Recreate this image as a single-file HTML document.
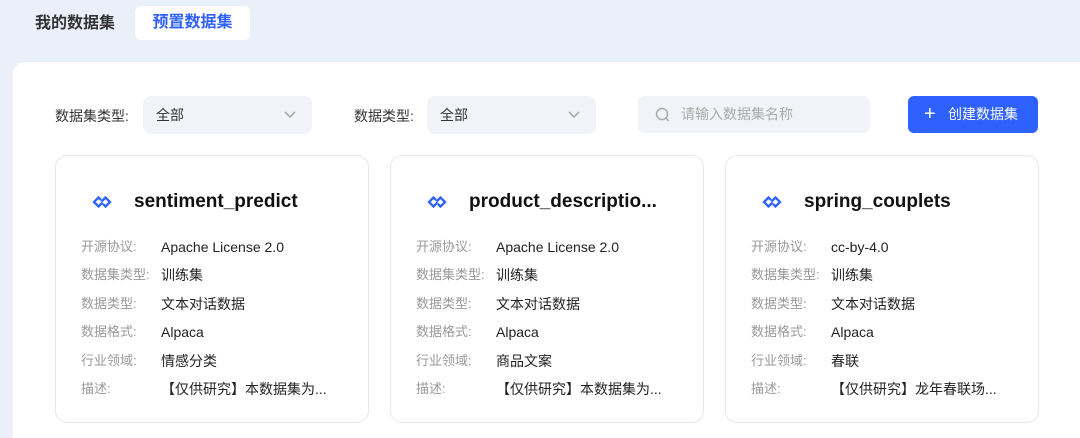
<!DOCTYPE html>
<html><head><meta charset="utf-8"><style>
*{margin:0;padding:0;box-sizing:border-box}
html{width:1080px;height:438px;overflow:hidden;background:#ebeffa}
body{width:1080px;height:438px;overflow:hidden;background:#ebeffa;font-family:"Liberation Sans","Noto Sans CJK SC",sans-serif;position:relative}
.tab1{position:absolute;left:35px;top:14px;font-size:16px;font-weight:bold;color:#333;line-height:20px}
.tab2{position:absolute;left:135px;top:6px;width:115px;height:34px;background:#fff;border-radius:6px;font-size:16px;font-weight:bold;color:#2f61ff;line-height:34px;text-align:center}
.panel{position:absolute;left:13px;top:62px;width:1067px;height:376px;background:#fff;border-radius:12px 0 0 0}
.lbl{position:absolute;top:106px;font-size:14px;color:#333;line-height:20px}
.sel{position:absolute;top:96px;height:38px;background:#f2f3f8;border-radius:8px;font-size:14px;color:#333;line-height:38px;padding-left:13px}
.sel svg{position:absolute;right:16px;top:15px}
.search{position:absolute;left:638px;top:96px;width:232px;height:37px;background:#f2f3f8;border-radius:6px;font-size:14px;color:#aaa;line-height:37px;padding-left:43px}
.search svg{position:absolute;left:17px;top:11px}
.btn{position:absolute;left:908px;top:96px;width:130px;height:37px;background:#2f61ff;border-radius:6px;color:#fff;font-size:14px;line-height:37px;padding-left:40px}
.btn span{position:absolute;left:16px;top:0;font-size:20px}
.card{position:absolute;top:155px;width:314px;height:268px;border:1px solid #e6e8f2;border-radius:12px;background:#fff}
.card .ic{position:absolute;left:36px;top:39px}
.card .t{position:absolute;left:78px;top:34px;font-size:19px;font-weight:bold;color:#111;line-height:24px;white-space:nowrap}
.row{position:absolute;left:25px;font-size:13px;color:#999;line-height:18px;white-space:nowrap}
.row b{position:absolute;left:80px;font-weight:normal;font-size:14px;color:#222}
</style></head><body>
<div class="tab1">我的数据集</div>
<div class="tab2">预置数据集</div>
<div class="panel"></div>
<div class="lbl" style="left:55px">数据集类型:</div>
<div class="sel" style="left:143px;width:169px">全部<svg width="12" height="8"><path d="M1 1l5 5 5-5" stroke="#999" fill="none" stroke-width="1.3"/></svg></div>
<div class="lbl" style="left:354px">数据类型:</div>
<div class="sel" style="left:427px;width:169px">全部<svg width="12" height="8"><path d="M1 1l5 5 5-5" stroke="#999" fill="none" stroke-width="1.3"/></svg></div>
<div class="search"><svg width="16" height="16"><circle cx="7" cy="7" r="5.5" stroke="#aaa" stroke-width="1.5" fill="none"/><path d="M11 11l2.5 3" stroke="#aaa" stroke-width="1.5"/></svg>请输入数据集名称</div>
<div class="btn"><span>+</span>创建数据集</div>

<div class="card" style="left:55px">
<svg class="ic" width="20" height="14" viewBox="0 0 20 14"><path d="M9 5L6.5 2.5 2 7l4.5 4.5 4-4M11 9l2.5 2.5L18 7l-4.5-4.5-4 4" stroke="#2f61ff" stroke-width="2.3" fill="none"/></svg>
<div class="t">sentiment_predict</div>
<div class="row" style="top:82px">开源协议:<b>Apache License 2.0</b></div>
<div class="row" style="top:110px">数据集类型:<b>训练集</b></div>
<div class="row" style="top:139px">数据类型:<b>文本对话数据</b></div>
<div class="row" style="top:167px">数据格式:<b>Alpaca</b></div>
<div class="row" style="top:196px">行业领域:<b>情感分类</b></div>
<div class="row" style="top:224px">描述:<b>【仅供研究】本数据集为...</b></div>
</div>
<div class="card" style="left:390px">
<svg class="ic" width="20" height="14" viewBox="0 0 20 14"><path d="M9 5L6.5 2.5 2 7l4.5 4.5 4-4M11 9l2.5 2.5L18 7l-4.5-4.5-4 4" stroke="#2f61ff" stroke-width="2.3" fill="none"/></svg>
<div class="t">product_descriptio...</div>
<div class="row" style="top:82px">开源协议:<b>Apache License 2.0</b></div>
<div class="row" style="top:110px">数据集类型:<b>训练集</b></div>
<div class="row" style="top:139px">数据类型:<b>文本对话数据</b></div>
<div class="row" style="top:167px">数据格式:<b>Alpaca</b></div>
<div class="row" style="top:196px">行业领域:<b>商品文案</b></div>
<div class="row" style="top:224px">描述:<b>【仅供研究】本数据集为...</b></div>
</div>
<div class="card" style="left:725px">
<svg class="ic" width="20" height="14" viewBox="0 0 20 14"><path d="M9 5L6.5 2.5 2 7l4.5 4.5 4-4M11 9l2.5 2.5L18 7l-4.5-4.5-4 4" stroke="#2f61ff" stroke-width="2.3" fill="none"/></svg>
<div class="t">spring_couplets</div>
<div class="row" style="top:82px">开源协议:<b>cc-by-4.0</b></div>
<div class="row" style="top:110px">数据集类型:<b>训练集</b></div>
<div class="row" style="top:139px">数据类型:<b>文本对话数据</b></div>
<div class="row" style="top:167px">数据格式:<b>Alpaca</b></div>
<div class="row" style="top:196px">行业领域:<b>春联</b></div>
<div class="row" style="top:224px">描述:<b>【仅供研究】龙年春联场...</b></div>
</div>
</body></html>
